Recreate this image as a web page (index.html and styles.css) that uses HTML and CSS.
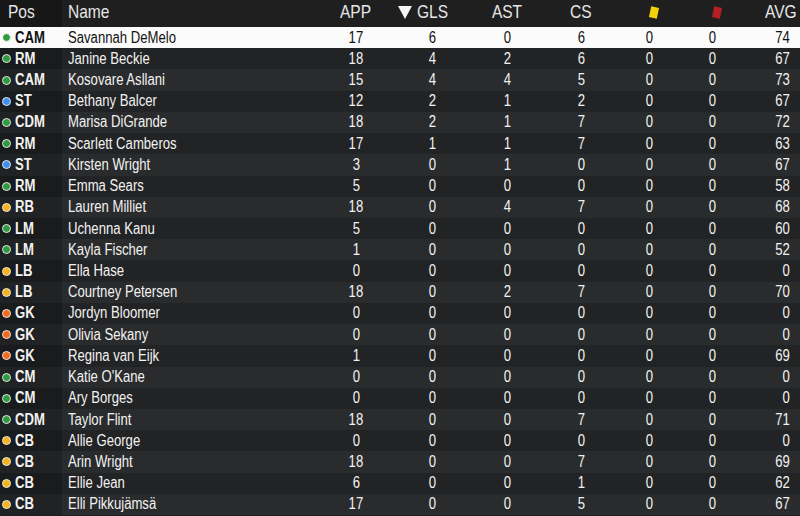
FILE: index.html
```html
<!DOCTYPE html>
<html>
<head>
<meta charset="utf-8">
<link rel="stylesheet" href="styles.css">
</head>
<body>
<div class="table">
  <div class="row head">
    <div class="c pos"><span class="t">Pos</span></div>
    <div class="c name"><span class="t">Name</span></div>
    <div class="c num"><span class="t">APP</span></div>
    <div class="c num gls"><span class="tri"></span><span class="t">GLS</span></div>
    <div class="c num"><span class="t">AST</span></div>
    <div class="c num"><span class="t">CS</span></div>
    <div class="c num"><span class="card yellow"></span></div>
    <div class="c num"><span class="card red"></span></div>
    <div class="c avg"><span class="t">AVG</span></div>
  </div>
  <div id="rows"></div>
</div>
<script src="app.js"></script>
</body>
</html>
```
FILE: app.js
```js
const data = [
  ["g","CAM","Savannah DeMelo",17,6,0,6,0,0,74],
  ["g","RM","Janine Beckie",18,4,2,6,0,0,67],
  ["g","CAM","Kosovare Asllani",15,4,4,5,0,0,73],
  ["b","ST","Bethany Balcer",12,2,1,2,0,0,67],
  ["g","CDM","Marisa DiGrande",18,2,1,7,0,0,72],
  ["g","RM","Scarlett Camberos",17,1,1,7,0,0,63],
  ["b","ST","Kirsten Wright",3,0,1,0,0,0,67],
  ["g","RM","Emma Sears",5,0,0,0,0,0,58],
  ["y","RB","Lauren Milliet",18,0,4,7,0,0,68],
  ["g","LM","Uchenna Kanu",5,0,0,0,0,0,60],
  ["g","LM","Kayla Fischer",1,0,0,0,0,0,52],
  ["y","LB","Ella Hase",0,0,0,0,0,0,0],
  ["y","LB","Courtney Petersen",18,0,2,7,0,0,70],
  ["o","GK","Jordyn Bloomer",0,0,0,0,0,0,0],
  ["o","GK","Olivia Sekany",0,0,0,0,0,0,0],
  ["o","GK","Regina van Eijk",1,0,0,0,0,0,69],
  ["g","CM","Katie O'Kane",0,0,0,0,0,0,0],
  ["g","CM","Ary Borges",0,0,0,0,0,0,0],
  ["g","CDM","Taylor Flint",18,0,0,7,0,0,71],
  ["y","CB","Allie George",0,0,0,0,0,0,0],
  ["y","CB","Arin Wright",18,0,0,7,0,0,69],
  ["y","CB","Ellie Jean",6,0,0,1,0,0,62],
  ["y","CB","Elli Pikkujämsä",17,0,0,5,0,0,67]
];
const rows = document.getElementById("rows");
data.forEach((d, i) => {
  const r = document.createElement("div");
  r.className = "row" + (i === 0 ? " sel" : (i % 2 ? " odd" : " even"));
  let h = `<div class="c pos"><span class="dot ${d[0]}"></span><b class="t">${d[1]}</b></div>`;
  h += `<div class="c name"><span class="t">${d[2]}</span></div>`;
  for (let k = 3; k < 9; k++) h += `<div class="c num"><span class="t">${d[k]}</span></div>`;
  h += `<div class="c avg"><span class="t">${d[9]}</span></div>`;
  r.innerHTML = h;
  rows.appendChild(r);
});
```
FILE: styles.css
```css
html, body {
  margin: 0;
  padding: 0;
  background: #1e1f20;
}
body {
  width: 800px;
  height: 516px;
  overflow: hidden;
  font-family: "Liberation Sans", Arial, sans-serif;
  font-size: 16px;
  color: #f2f2f2;
}
.table {
  display: flex;
  flex-direction: column;
}
.row {
  display: grid;
  grid-template-columns: 62px 256px 76px 76px 74px 74px 62px 64px 56px;
  height: 21.23px;
  align-items: center;
  line-height: 1;
}
.t {
  display: inline-block;
  transform: scaleX(0.82);
  transform-origin: left center;
}
.num .t { transform-origin: center center; }
.avg .t { transform-origin: right center; }
.row.head {
  height: 27px;
  background: #1f1f1f;
  color: #e6e6e6;
  font-size: 18.5px;
  align-items: start;
}
.row.head .t { transform: scaleX(0.84); }
.row.head .c {
  padding-top: 3px;
}
.row.head .pos {
  background: #171717;
  height: 27px;
  box-sizing: border-box;
  padding-left: 8px;
  align-items: flex-start;
}
.c {
  white-space: nowrap;
}
.pos {
  display: flex;
  align-items: center;
  height: 100%;
  padding-left: 2px;
}
.pos b {
  font-weight: bold;
  margin-left: 4px;
}
.name {
  padding-left: 6px;
}
.num {
  text-align: center;
}
.avg {
  text-align: right;
  padding-right: 10px;
}
.row.head .avg {
  padding-right: 3px;
}
.even { background: #2a2b2c; }
.odd { background: #222324; }
.even .pos { background: #212223; }
.odd .pos { background: #1a1b1c; }
.sel {
  background: #fbfbfb;
  color: #111;
}
.sel .pos { background: #fbfbfb; }
.dot {
  width: 7px;
  height: 7px;
  border-radius: 50%;
  border: 1px solid #e8e8e8;
  flex: none;
}
.dot.g { background: #2f9a40; }
.dot.b { background: #3d8ff0; }
.dot.o { background: #f26a1b; }
.dot.y { background: #f5b41e; }
.sel .dot { border-color: #fbfbfb; }
.row.head .gls {
  display: flex;
  align-items: center;
  justify-content: flex-start;
  gap: 2px;
  padding-left: 4px;
  padding-top: 3px;
}
.tri {
  width: 0;
  height: 0;
  border-left: 7px solid transparent;
  border-right: 7px solid transparent;
  border-top: 13px solid #f4f4f4;
  margin-top: 1px;
}
.card {
  display: inline-block;
  width: 8px;
  height: 11px;
  transform: rotate(12deg);
  margin-top: 3px;
}
.card.yellow { background: #f3d20c; margin-left: 10px; }
.card.red { background: #b81f24; margin-left: 10px; }
```
